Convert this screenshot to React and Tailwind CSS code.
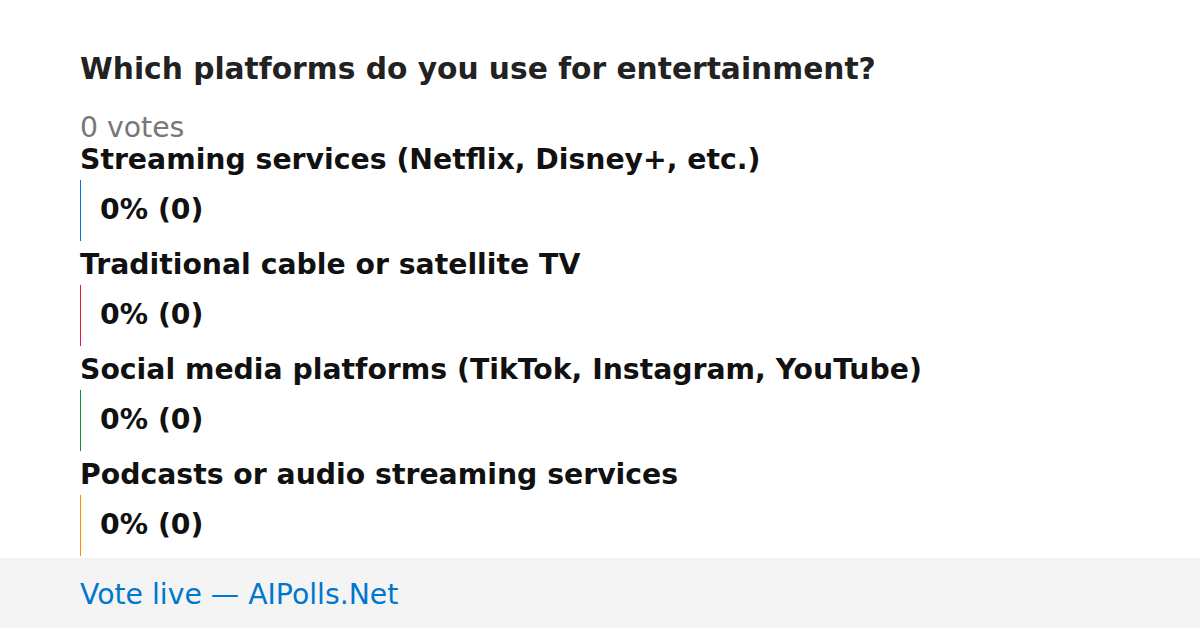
const options = [
  { label: 'Streaming services (Netflix, Disney+, etc.)', color: 'bg-[#0074d9]', votes: 0 },
  { label: 'Traditional cable or satellite TV', color: 'bg-[#e6193c]', votes: 0 },
  { label: 'Social media platforms (TikTok, Instagram, YouTube)', color: 'bg-[#0a8f3a]', votes: 0 },
  { label: 'Podcasts or audio streaming services', color: 'bg-[#ff8c00]', votes: 0 },
];

const App = () => {
  const total = options.reduce((sum, o) => sum + o.votes, 0);

  return (
    <div className="w-[1200px] h-[628px] bg-white flex flex-col overflow-hidden font-['DejaVu_Sans',sans-serif]">
      <div className="flex-1 min-h-0 px-20 pt-[51px]">
        <h1 className="text-[29.7px] leading-[36px] font-bold text-[#222]">
          Which platforms do you use for entertainment?
        </h1>
        <div className="mt-[25px] text-[28.3px] leading-[32px] text-[#777]">{total} votes</div>

        {options.map((opt) => {
          const pct = total ? Math.round((opt.votes / total) * 100) : 0;
          return (
            <div key={opt.label}>
              <div className="mb-[4px] text-[28.3px] leading-[32px] font-bold text-[#111]">
                {opt.label}
              </div>
              <div className="relative h-[61px] flex items-start pt-[14px] mb-[8px]">
                <div className={`absolute left-0 top-0 h-full w-px ${opt.color}`} style={{ width: pct ? `${pct}%` : undefined }}></div>
                <span className="relative pl-5 text-[28.3px] leading-[32px] font-bold text-[#111]">
                  {pct}% ({opt.votes})
                </span>
              </div>
            </div>
          );
        })}
      </div>

      <div className="h-[70px] shrink-0 bg-[#f4f4f4] px-20 pt-[3px] flex items-center">
        <span className="text-[28.3px] leading-[32px] text-[#0077cc]">Vote live — AIPolls.Net</span>
      </div>
    </div>
  );
};

export default App;
